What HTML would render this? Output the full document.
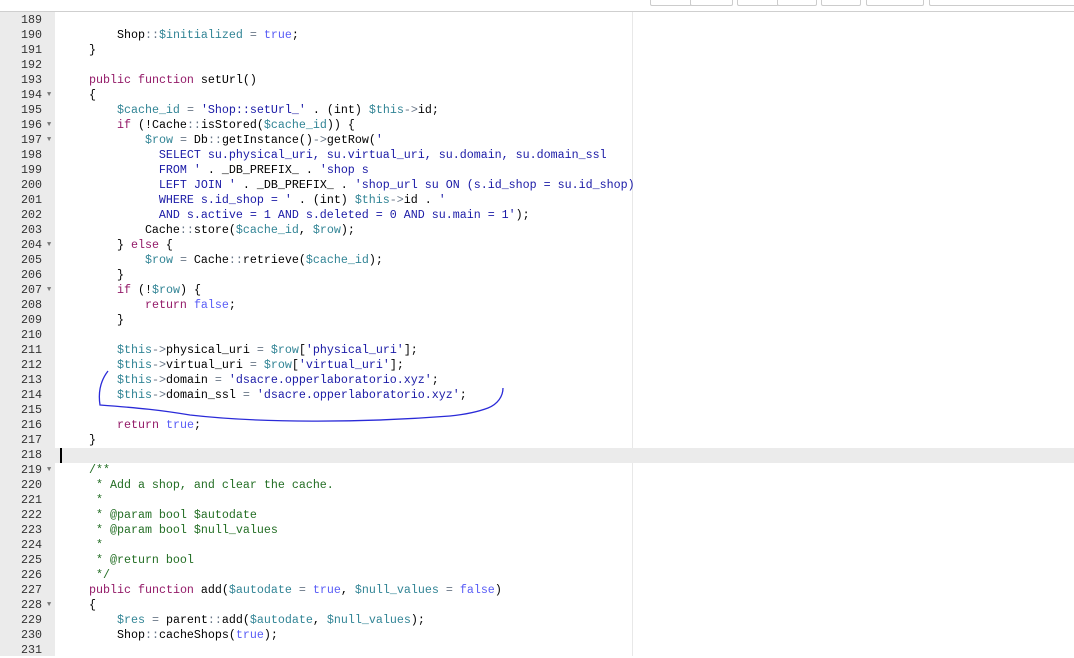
<!DOCTYPE html>
<html><head><meta charset="utf-8"><style>
html,body{margin:0;padding:0;width:1074px;height:656px;overflow:hidden;background:#fff;}
.top{position:absolute;left:0;top:0;width:1074px;height:11px;border-bottom:1px solid #cfcfcf;background:#fff;}
.btn{position:absolute;top:-3px;height:7px;border:1px solid #ccc;border-radius:2px;background:#fff;}
.gut{position:absolute;left:0;top:12px;width:55px;height:644px;background:#ebebeb;}
.ed{position:absolute;left:0;top:13px;width:1074px;font-family:"Liberation Mono",monospace;font-size:11.67px;}
.l{height:15px;line-height:15px;position:relative;white-space:pre;color:#000;}
.n{position:absolute;left:0;width:42px;text-align:right;color:#333;}
.f{position:absolute;left:47px;top:0;font-size:7px;color:#777;}
.t{position:absolute;left:61px;}
.act{background:#ebebeb;}
.k{color:#931a68}.v{color:#318495}.s{color:#1a1aa6}.c{color:#585cf6}.o{color:#687687}.m{color:#236e24}
.pm{position:absolute;left:632px;top:12px;width:1px;height:644px;background:#e8e8e8;}
</style></head><body>
<div class="top">
<div class="btn" style="left:650px;width:40px"></div><div class="btn" style="left:690px;width:41px"></div>
<div class="btn" style="left:737px;width:40px"></div><div class="btn" style="left:777px;width:38px"></div>
<div class="btn" style="left:821px;width:38px"></div><div class="btn" style="left:866px;width:56px"></div>
<div class="btn" style="left:929px;width:150px"></div>
</div>
<div class="gut"></div>
<div class="pm"></div>
<div class="ed">
<div class="l"><span class="n">189</span><span class="t"></span></div>
<div class="l"><span class="n">190</span><span class="t">        Shop<span class="o">::</span><span class="v">$initialized</span> <span class="o">=</span> <span class="c">true</span>;</span></div>
<div class="l"><span class="n">191</span><span class="t">    }</span></div>
<div class="l"><span class="n">192</span><span class="t"></span></div>
<div class="l"><span class="n">193</span><span class="t">    <span class="k">public</span> <span class="k">function</span> setUrl()</span></div>
<div class="l"><span class="n">194</span><span class="f">▼</span><span class="t">    {</span></div>
<div class="l"><span class="n">195</span><span class="t">        <span class="v">$cache_id</span> <span class="o">=</span> <span class="s">'Shop::setUrl_'</span> . (int) <span class="v">$this</span><span class="o">-&gt;</span>id;</span></div>
<div class="l"><span class="n">196</span><span class="f">▼</span><span class="t">        <span class="k">if</span> (!Cache<span class="o">::</span>isStored(<span class="v">$cache_id</span>)) {</span></div>
<div class="l"><span class="n">197</span><span class="f">▼</span><span class="t">            <span class="v">$row</span> <span class="o">=</span> Db<span class="o">::</span>getInstance()<span class="o">-&gt;</span>getRow(<span class="s">'</span></span></div>
<div class="l"><span class="n">198</span><span class="t"><span class="s">              SELECT su.physical_uri, su.virtual_uri, su.domain, su.domain_ssl</span></span></div>
<div class="l"><span class="n">199</span><span class="t"><span class="s">              FROM '</span> . _DB_PREFIX_ . <span class="s">'shop s</span></span></div>
<div class="l"><span class="n">200</span><span class="t"><span class="s">              LEFT JOIN '</span> . _DB_PREFIX_ . <span class="s">'shop_url su ON (s.id_shop = su.id_shop)</span></span></div>
<div class="l"><span class="n">201</span><span class="t"><span class="s">              WHERE s.id_shop = '</span> . (int) <span class="v">$this</span><span class="o">-&gt;</span>id . <span class="s">'</span></span></div>
<div class="l"><span class="n">202</span><span class="t"><span class="s">              AND s.active = 1 AND s.deleted = 0 AND su.main = 1'</span>);</span></div>
<div class="l"><span class="n">203</span><span class="t">            Cache<span class="o">::</span>store(<span class="v">$cache_id</span>, <span class="v">$row</span>);</span></div>
<div class="l"><span class="n">204</span><span class="f">▼</span><span class="t">        } <span class="k">else</span> {</span></div>
<div class="l"><span class="n">205</span><span class="t">            <span class="v">$row</span> <span class="o">=</span> Cache<span class="o">::</span>retrieve(<span class="v">$cache_id</span>);</span></div>
<div class="l"><span class="n">206</span><span class="t">        }</span></div>
<div class="l"><span class="n">207</span><span class="f">▼</span><span class="t">        <span class="k">if</span> (!<span class="v">$row</span>) {</span></div>
<div class="l"><span class="n">208</span><span class="t">            <span class="k">return</span> <span class="c">false</span>;</span></div>
<div class="l"><span class="n">209</span><span class="t">        }</span></div>
<div class="l"><span class="n">210</span><span class="t"></span></div>
<div class="l"><span class="n">211</span><span class="t">        <span class="v">$this</span><span class="o">-&gt;</span>physical_uri <span class="o">=</span> <span class="v">$row</span>[<span class="s">'physical_uri'</span>];</span></div>
<div class="l"><span class="n">212</span><span class="t">        <span class="v">$this</span><span class="o">-&gt;</span>virtual_uri <span class="o">=</span> <span class="v">$row</span>[<span class="s">'virtual_uri'</span>];</span></div>
<div class="l"><span class="n">213</span><span class="t">        <span class="v">$this</span><span class="o">-&gt;</span>domain <span class="o">=</span> <span class="s">'dsacre.opperlaboratorio.xyz'</span>;</span></div>
<div class="l"><span class="n">214</span><span class="t">        <span class="v">$this</span><span class="o">-&gt;</span>domain_ssl <span class="o">=</span> <span class="s">'dsacre.opperlaboratorio.xyz'</span>;</span></div>
<div class="l"><span class="n">215</span><span class="t"></span></div>
<div class="l"><span class="n">216</span><span class="t">        <span class="k">return</span> <span class="c">true</span>;</span></div>
<div class="l"><span class="n">217</span><span class="t">    }</span></div>
<div class="l act"><span class="n">218</span><span class="t" style="border-left:2px solid #000;height:15px;left:60px"></span></div>
<div class="l"><span class="n">219</span><span class="f">▼</span><span class="t">    <span class="m">/**</span></span></div>
<div class="l"><span class="n">220</span><span class="t"><span class="m">     * Add a shop, and clear the cache.</span></span></div>
<div class="l"><span class="n">221</span><span class="t"><span class="m">     *</span></span></div>
<div class="l"><span class="n">222</span><span class="t"><span class="m">     * @param bool $autodate</span></span></div>
<div class="l"><span class="n">223</span><span class="t"><span class="m">     * @param bool $null_values</span></span></div>
<div class="l"><span class="n">224</span><span class="t"><span class="m">     *</span></span></div>
<div class="l"><span class="n">225</span><span class="t"><span class="m">     * @return bool</span></span></div>
<div class="l"><span class="n">226</span><span class="t"><span class="m">     */</span></span></div>
<div class="l"><span class="n">227</span><span class="t">    <span class="k">public</span> <span class="k">function</span> add(<span class="v">$autodate</span> <span class="o">=</span> <span class="c">true</span>, <span class="v">$null_values</span> <span class="o">=</span> <span class="c">false</span>)</span></div>
<div class="l"><span class="n">228</span><span class="f">▼</span><span class="t">    {</span></div>
<div class="l"><span class="n">229</span><span class="t">        <span class="v">$res</span> <span class="o">=</span> parent<span class="o">::</span>add(<span class="v">$autodate</span>, <span class="v">$null_values</span>);</span></div>
<div class="l"><span class="n">230</span><span class="t">        Shop<span class="o">::</span>cacheShops(<span class="c">true</span>);</span></div>
<div class="l"><span class="n">231</span><span class="t"></span></div>
</div>
<svg style="position:absolute;left:0;top:0" width="1074" height="656">
<path d="M108,371 C101,380 98,392 100,405 C140,408 160,410 190,415 C260,423 360,423 450,416 C470,414 480,411 488,408 C498,404 503,396 503,388" fill="none" stroke="#2a2ad8" stroke-width="1.3"/>
</svg>
</body></html>
